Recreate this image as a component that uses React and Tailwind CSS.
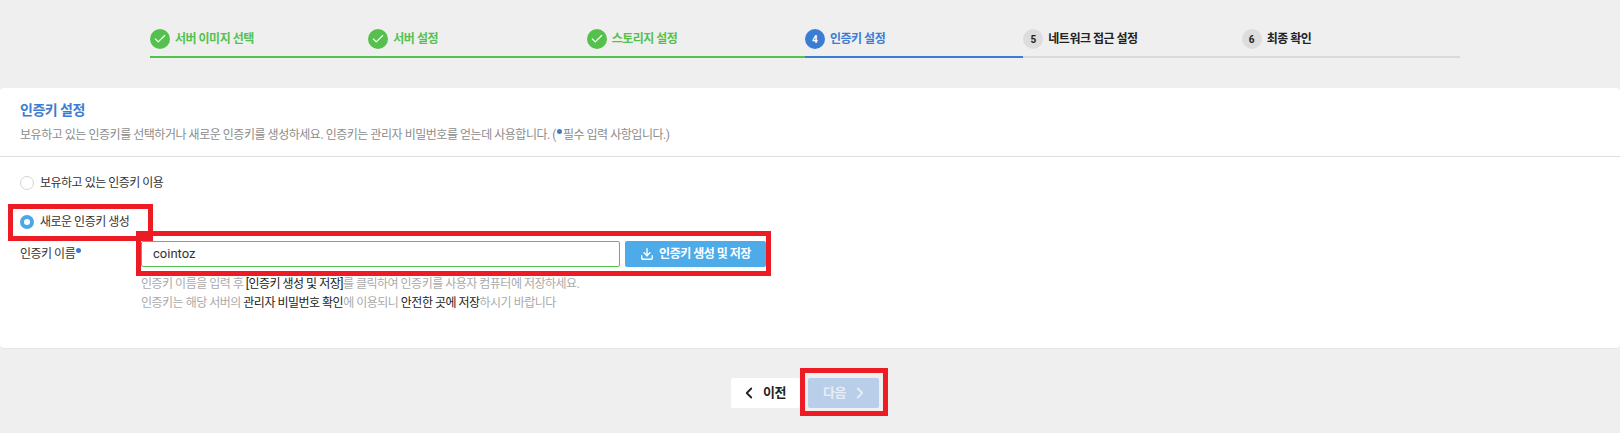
import { Check, ChevronLeft, ChevronRight, Download } from "lucide-react";

const steps = [
  { label: "서버 이미지 선택", state: "done" },
  { label: "서버 설정", state: "done" },
  { label: "스토리지 설정", state: "done" },
  { label: "인증키 설정", state: "active", n: 4 },
  { label: "네트워크 접근 설정", state: "todo", n: 5 },
  { label: "최종 확인", state: "todo", n: 6 },
];

const Dot = () => <span className="inline-block w-[5px] h-[5px] rounded-full bg-[#3b7dd3] align-[5px] mx-[1px]" />;

const Step = ({ step }) => {
  const line =
    step.state === "done" ? "border-[#55c14d]" : step.state === "active" ? "border-[#3b7dd3]" : "border-[#d9d9d9]";
  const text =
    step.state === "done" ? "text-[#55c14d]" : step.state === "active" ? "text-[#3b7dd3]" : "text-[#222222]";
  return (
    <div className={`flex items-center gap-[5px] h-[29px] pb-[7px] border-b-2 ${line}`}>
      {step.state === "done" ? (
        <span className="w-5 h-5 rounded-full bg-[#55c14d] flex items-center justify-center">
          <Check className="w-3.5 h-3.5 text-white" strokeWidth={2} />
        </span>
      ) : (
        <span
          className={`w-5 h-5 rounded-full flex items-center justify-center text-[10px] font-bold ${
            step.state === "active" ? "bg-[#3b7dd3] text-white" : "bg-[#dddddd] text-[#222222]"
          }`}
        >
          {step.n}
        </span>
      )}
      <span className={`text-xs font-bold tracking-[-0.5px] ${text}`}>{step.label}</span>
    </div>
  );
};

const App = () => {
  return (
    <div className="relative w-[1620px] h-[433px] bg-[#efefef] overflow-hidden font-['Roboto','Noto_Sans_CJK_KR',sans-serif]">
      {/* Stepper */}
      <div className="pt-[29px] pl-[150px] pr-[160px] grid grid-cols-6">
        {steps.map((s) => (
          <Step key={s.label} step={s} />
        ))}
      </div>

      {/* Card */}
      <div className="mt-[30px] h-[261px] bg-white rounded-[4px] border-b border-[#e6e6e6]">
        <div className="h-[69px] px-5 pt-[13px] border-b border-[#dfdfdf]">
          <h2 className="text-sm leading-[18px] font-bold tracking-[-0.5px] text-[#3b7dd3]">인증키 설정</h2>
          <p className="mt-[8px] text-xs leading-[16px] tracking-[-0.47px] text-[#8c8c8c]">
            보유하고 있는 인증키를 선택하거나 새로운 인증키를 생성하세요. 인증키는 관리자 비밀번호를 얻는데 사용합니다. (
            <Dot />필수 입력 사항입니다.)
          </p>
        </div>

        <div className="pl-5 pt-[18px]">
          <label className="flex items-center gap-[6px] h-[16px] text-xs tracking-[-0.5px] text-[#333333]">
            <span className="w-[14px] h-[14px] rounded-full border border-[#d5d5d5] bg-white" />
            보유하고 있는 인증키 이용
          </label>
          <label className="mt-[23px] flex items-center gap-[6px] h-[16px] text-xs tracking-[-0.5px] text-[#333333]">
            <span className="w-[14px] h-[14px] rounded-full border-[4px] border-[#4aa8e8] bg-white" />
            새로운 인증키 생성
          </label>

          <div className="mt-[11px] flex">
            <div className="w-[121px] pt-[6px] text-xs leading-[14px] tracking-[-0.5px] text-[#333333]">
              인증키 이름
              <Dot />
            </div>
            <div>
              <div className="flex gap-[5px]">
                <div className="w-[479px] h-[26px] border border-[#55c14d] rounded-[2px] pl-[11px] flex items-center text-[13px] text-[#333333]">
                  cointoz
                </div>
                <button className="w-[141px] h-[26px] rounded-[2px] bg-[#4cabe8] text-white text-xs font-bold tracking-[-0.5px] flex items-center justify-center gap-[5px]">
                  <Download className="w-[14px] h-[14px]" strokeWidth={2.4} />
                  인증키 생성 및 저장
                </button>
              </div>
              <p className="mt-[8px] text-xs leading-[19px] tracking-[-0.5px] text-[#aaaaaa]">
                인증키 이름을 입력 후 <span className="text-[#222222]">[인증키 생성 및 저장]</span>를 클릭하여 인증키를 사용자 컴퓨터에 저장하세요.
              </p>
              <p className="text-xs leading-[19px] tracking-[-0.5px] text-[#aaaaaa]">
                인증키는 해당 서버의 <span className="text-[#222222]">관리자 비밀번호 확인</span>에 이용되니{" "}
                <span className="text-[#222222]">안전한 곳에 저장</span>하시기 바랍니다
              </p>
            </div>
          </div>
        </div>
      </div>

      {/* Bottom buttons */}
      <div className="mt-[29px] pl-[731px] flex gap-[8px]">
        <button className="w-[69px] h-[30px] pl-[9px] rounded-[2px] bg-white text-[#222222] text-[13px] font-bold tracking-[-0.5px] flex items-center gap-[5px]">
          <ChevronLeft className="w-[18px] h-[18px]" strokeWidth={2.4} />
          이전
        </button>
        <button className="w-[71px] h-[30px] pl-[15px] rounded-[2px] bg-[#b9cfe9] text-[#e6edf6] text-[13px] font-bold tracking-[-0.5px] flex items-center gap-[5px]">
          다음
          <ChevronRight className="w-[18px] h-[18px]" strokeWidth={2.4} />
        </button>
      </div>

      {/* Red annotation boxes */}
      <div className="absolute left-[8px] top-[204px] w-[145px] h-[37px] border-[5px] border-[#ed1c24]" />
      <div className="absolute left-[136px] top-[231px] w-[635px] h-[45px] border-[5px] border-[#ed1c24]" />
      <div className="absolute left-[800px] top-[368px] w-[88px] h-[48px] border-[5px] border-[#ed1c24]" />
    </div>
  );
};

export default App;
